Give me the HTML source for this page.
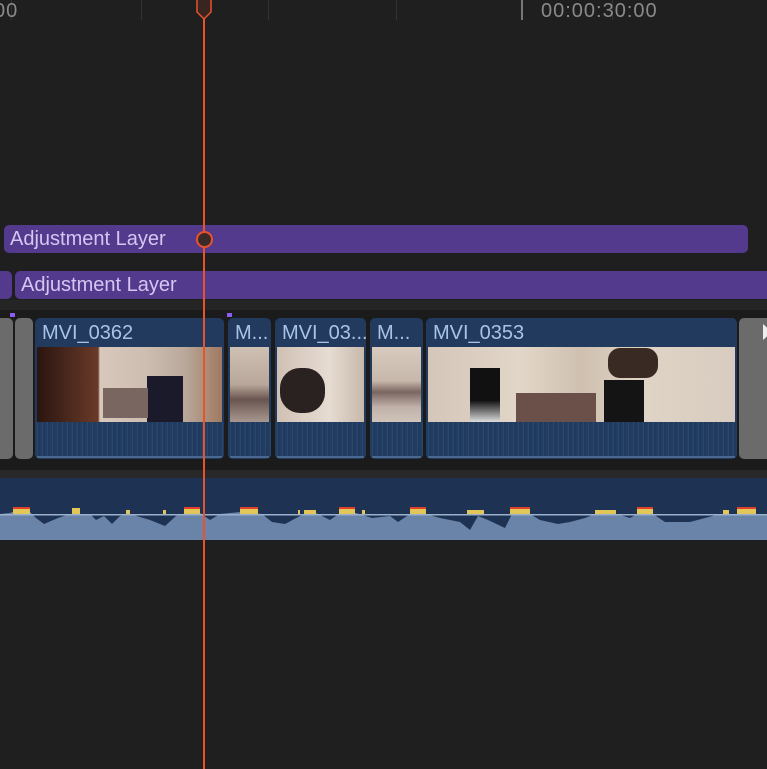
<!DOCTYPE html>
<html><head><meta charset="utf-8"><style>
*{margin:0;padding:0;box-sizing:border-box}
body{width:767px;height:769px;background:#1f1f1f;position:relative;overflow:hidden;font-family:"Liberation Sans",sans-serif}
.a{position:absolute}
.tick{position:absolute;top:0;width:1px;height:20px;background:#333}
.adj{position:absolute;background:#533a8c;color:#d5c6f2;font-size:20px;line-height:29px;padding-left:6px;border-radius:5px;height:28px;white-space:nowrap;overflow:hidden}
.clip{position:absolute;top:318px;height:141px;background:#213a5e;border-radius:5px;overflow:hidden}
.clip .t{position:absolute;left:7px;top:4px;color:#a9c3e8;font-size:20px;white-space:nowrap}
.clip .th{position:absolute;top:29px;height:75px;left:2px;right:2px;background:#c9b9ad}
.clip .au{position:absolute;top:104px;left:0;right:0;height:35px;background:repeating-linear-gradient(90deg,#223d62 0 2px,#2a4770 2px 3px,#21395c 3px 5px)}
.clip .bl{position:absolute;bottom:1px;left:2px;right:2px;height:2px;background:#4a6890}
.gray{position:absolute;top:318px;height:141px;background:#6b6b6b;border-radius:5px}
.rt{position:absolute;top:0;color:#8a8a8a;font-size:20px;letter-spacing:1px}
</style></head><body>
<div class="tick" style="left:11px"></div><div class="tick" style="left:141px"></div><div class="tick" style="left:268px"></div><div class="tick" style="left:396px"></div><div class="tick" style="left:612px"></div>
<div class="a" style="left:521px;top:0;width:2px;height:20px;background:#777"></div>
<div class="rt" style="left:-6px">00</div>
<div class="rt" style="left:541px">00:00:30:00</div>

<div class="a" style="left:0;top:300px;width:767px;height:10px;background:#252525"></div>
<div class="a" style="left:0;top:310px;width:767px;height:160px;background:#1b1b1b"></div>
<div class="a" style="left:10px;top:313px;width:5px;height:4px;background:#8a5cf0"></div>
<div class="a" style="left:227px;top:313px;width:5px;height:4px;background:#8a5cf0"></div>

<div class="adj" style="left:4px;top:225px;width:744px">Adjustment Layer</div>
<div class="adj" style="left:-6px;top:271px;width:18px"></div>
<div class="adj" style="left:15px;top:271px;width:760px">Adjustment Layer</div>

<div class="gray" style="left:-5px;width:18px"></div>
<div class="gray" style="left:15px;width:18px"></div>
<div class="clip" style="left:35px;width:189px"><div class="t">MVI_0362</div>
<div class="th" style="background:linear-gradient(90deg,#2a1510 0%,#6a3a28 33%,#d8c8bc 34%,#cdbdb0 60%,#b9a89b 80%,#a07a60 100%)"></div>
<div class="a" style="left:112px;top:58px;width:36px;height:62px;background:#1a1a2a"></div>
<div class="a" style="left:68px;top:70px;width:45px;height:30px;background:#7a6660"></div>
<div class="au"></div><div class="bl"></div></div>
<div class="clip" style="left:228px;width:43px"><div class="t">M...</div>
<div class="th" style="background:linear-gradient(#cfc0b4 0%,#b8a79a 50%,#6a5550 70%,#a89890 100%)"></div><div class="au"></div><div class="bl"></div></div>
<div class="clip" style="left:275px;width:91px"><div class="t">MVI_03...</div>
<div class="th" style="background:linear-gradient(90deg,#d0c0b4,#e6dcd2 60%,#c8b8ac)"></div>
<div class="a" style="left:5px;top:50px;width:45px;height:45px;border-radius:20px;background:#2a2220"></div>
<div class="au"></div><div class="bl"></div></div>
<div class="clip" style="left:370px;width:53px"><div class="t">M...</div>
<div class="th" style="background:linear-gradient(#d8cabe 0%,#c8b8ac 45%,#7a6560 60%,#bfb1a8 80%,#d0c4ba 100%)"></div><div class="au"></div><div class="bl"></div></div>
<div class="clip" style="left:426px;width:311px"><div class="t">MVI_0353</div>
<div class="th" style="background:linear-gradient(90deg,#d4c6b8,#e2d6c8 30%,#cfc0b0 50%,#e0d4c6 70%,#d8ccc0)"></div>
<div class="a" style="left:44px;top:50px;width:30px;height:54px;background:linear-gradient(#111 60%,#ddd)"></div>
<div class="a" style="left:178px;top:62px;width:40px;height:42px;background:#141414"></div>
<div class="a" style="left:182px;top:30px;width:50px;height:30px;background:#3a2a24;border-radius:12px"></div>
<div class="a" style="left:90px;top:75px;width:80px;height:29px;background:#6a5048"></div>
<div class="au"></div><div class="bl"></div></div>
<div class="gray" style="left:739px;width:40px"><div class="a" style="left:24px;top:6px;width:0;height:0;border-left:9px solid #eee;border-top:8px solid transparent;border-bottom:8px solid transparent"></div></div>

<div class="a" style="left:0;top:470px;width:767px;height:8px;background:#282828"></div>
<svg class="a" style="left:0;top:478px" width="767" height="62">
<rect width="767" height="62" fill="#1e3354"/>
<path fill="#6a83a8" d="M0 36 L10 35 L12 34 L30 34 L36 40 L44 46 L58 40 L70 36 L90 36 L96 42 L104 38 L112 46 L120 38 L130 36 L150 42 L165 48 L176 38 L186 35 L200 35 L210 42 L220 36 L240 34 L262 36 L272 44 L285 46 L300 38 L316 35 L330 42 L340 35 L356 35 L372 40 L390 38 L398 44 L410 36 L426 36 L440 40 L460 44 L470 52 L478 38 L488 42 L505 50 L512 36 L530 36 L540 42 L558 46 L570 44 L585 40 L595 36 L617 36 L630 40 L637 36 L653 36 L665 44 L690 44 L705 40 L720 36 L737 36 L757 36 L767 36 L767 62 L0 62Z"/>
<rect y="36" width="767" height="1.5" fill="#9bb0cc"/>
<g fill="#e2c65a">
<rect x="13" y="30" width="17" height="6"/><rect x="72" y="30" width="8" height="6"/><rect x="126" y="32" width="4" height="4"/><rect x="163" y="32" width="3" height="4"/><rect x="184" y="30" width="16" height="6"/><rect x="240" y="30" width="18" height="6"/><rect x="298" y="32" width="2" height="4"/><rect x="304" y="32" width="12" height="4"/><rect x="339" y="30" width="16" height="6"/><rect x="362" y="32" width="3" height="4"/><rect x="410" y="30" width="16" height="6"/><rect x="467" y="32" width="17" height="4"/><rect x="510" y="30" width="20" height="6"/><rect x="595" y="32" width="21" height="4"/><rect x="637" y="30" width="16" height="6"/><rect x="723" y="32" width="6" height="4"/><rect x="737" y="30" width="19" height="6"/>
</g>
<g fill="#e0402a">
<rect x="13" y="29" width="17" height="2"/><rect x="184" y="29" width="16" height="2"/><rect x="240" y="29" width="18" height="2"/><rect x="339" y="29" width="16" height="2"/><rect x="410" y="29" width="16" height="2"/><rect x="510" y="29" width="20" height="2"/><rect x="637" y="29" width="16" height="2"/><rect x="737" y="29" width="19" height="2"/>
</g>
</svg>

<div class="a" style="left:203px;top:16px;width:2px;height:753px;background:#e8532a"></div>
<svg class="a" style="left:194px;top:0" width="22" height="22"><path d="M3 -2 V12 L10 19 L17 12 V-2" fill="#3a2420" stroke="#e8532a" stroke-width="1.5"/></svg>
<div class="a" style="left:196px;top:231px;width:17px;height:17px;border-radius:50%;background:#3a2a28;border:2px solid #e8532a"></div>
</body></html>
